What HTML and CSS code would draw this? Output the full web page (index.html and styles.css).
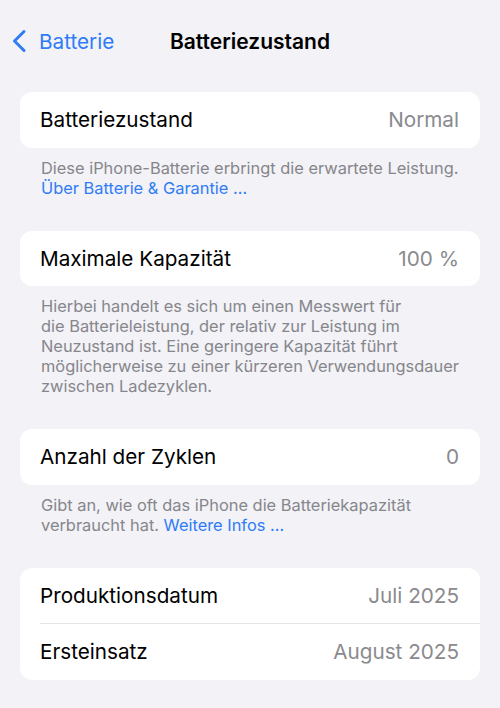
FILE: index.html
```html
<!DOCTYPE html>
<html lang="de">
  <head>
    <meta charset="UTF-8" />
    <title>Batteriezustand</title>
    <link rel="stylesheet" href="styles.css">
  </head>
  <body>
    <div class="nav">
      <a class="back" href="#">
        <svg class="chevron" width="16" height="24" viewBox="0 0 16 24">
          <path d="M13 2.5 L3.5 12 L13 21.5" fill="none" stroke="#2f7cf6" stroke-width="3" stroke-linecap="round" stroke-linejoin="round" />
        </svg>
        <span>Batterie</span>
      </a>
      <div class="title">Batteriezustand</div>
      <div></div>
    </div>

    <div class="section">
      <div class="card">
        <div class="row">
          <span class="label">Batteriezustand</span>
          <span class="value">Normal</span>
        </div>
      </div>
      <p class="footer">
        Diese iPhone-Batterie erbringt die erwartete Leistung.<br />
        <a href="#">Über Batterie &amp; Garantie …</a>
      </p>
    </div>

    <div class="section">
      <div class="card">
        <div class="row">
          <span class="label">Maximale Kapazität</span>
          <span class="value">100 %</span>
        </div>
      </div>
      <p class="footer">
        Hierbei handelt es sich um einen Messwert für<br />
        die Batterieleistung, der relativ zur Leistung im<br />
        Neuzustand ist. Eine geringere Kapazität führt<br />
        möglicherweise zu einer kürzeren Verwendungsdauer<br />
        zwischen Ladezyklen.
      </p>
    </div>

    <div class="section">
      <div class="card">
        <div class="row">
          <span class="label">Anzahl der Zyklen</span>
          <span class="value">0</span>
        </div>
      </div>
      <p class="footer">
        Gibt an, wie oft das iPhone die Batteriekapazität<br />
        verbraucht hat. <a href="#">Weitere Infos …</a>
      </p>
    </div>

    <div class="section">
      <div class="card">
        <div class="row">
          <span class="label">Produktionsdatum</span>
          <span class="value">Juli 2025</span>
        </div>
        <div class="row">
          <span class="label">Ersteinsatz</span>
          <span class="value">August 2025</span>
        </div>
      </div>
    </div>
  </body>
</html>
```

FILE: styles.css
```css
body {
  font-family: "Inter", "Noto Sans", sans-serif;
  background-color: #f2f2f7;
  color: #000;
  margin: 0;
  padding: 0 20px;
}
a {
  color: #2f7cf6;
  text-decoration: none;
}
.nav {
  display: grid;
  grid-template-columns: 1fr auto 1fr;
  align-items: center;
  height: 42px;
  padding-top: 20px;
  margin: 0 -20px 30px;
}
.back {
  display: flex;
  align-items: center;
  gap: 12px;
  padding-left: 11px;
  font-size: 20.7px;
}
.title {
  font-size: 21px;
  font-weight: 600;
}
.section {
  margin-bottom: 33px;
}
.card {
  background: #fff;
  border-radius: 12px;
  overflow: hidden;
}
.row {
  display: flex;
  justify-content: space-between;
  align-items: center;
  height: 55.5px;
  margin-left: 20px;
  padding-right: 21px;
  font-size: 20.7px;
}
.row + .row {
  border-top: 1px solid #e3e3e8;
}
.value {
  color: #8a8a8e;
}
.footer {
  margin: 0;
  padding: 10px 20px 0 21px;
  font-size: 16.4px;
  line-height: 20px;
  color: #86868b;
}
```
